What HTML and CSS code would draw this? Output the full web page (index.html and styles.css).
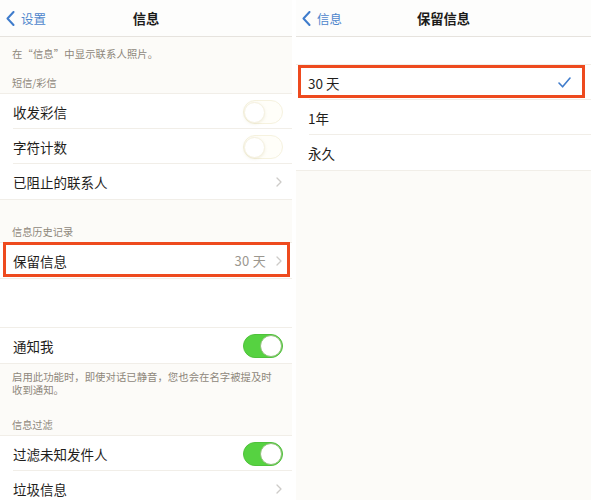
FILE: index.html
```html
<!DOCTYPE html>
<html lang="zh-CN">
<head>
<meta charset="utf-8">
<title>信息</title>
<link rel="stylesheet" href="styles.css">
</head>
<body>
<div class="screens">
  <section class="panel left">
    <header class="nav">
      <div class="back">
        <svg class="back-chev" width="9" height="15" viewBox="0 0 9 15"><path d="M7.5 1 L1.5 7.5 L7.5 14" fill="none" stroke="#3f7ccc" stroke-width="2" stroke-linecap="round" stroke-linejoin="round"/></svg>
        <span>设置</span>
      </div>
      <h1 class="title">信息</h1>
    </header>

    <p class="note first">在“信息”中显示联系人照片。</p>
    <h2 class="group-title t1">短信/彩信</h2>
    <div class="group">
      <div class="row"><span class="label">收发彩信</span><span class="switch off"><span class="knob"></span></span></div>
      <div class="row"><span class="label">字符计数</span><span class="switch off"><span class="knob"></span></span></div>
      <div class="row"><span class="label">已阻止的联系人</span><svg class="chev" width="6" height="10" viewBox="0 0 6 10"><path d="M1 1 L5 5 L1 9" fill="none" stroke="#cdcbc8" stroke-width="1.3" stroke-linecap="round" stroke-linejoin="round"/></svg></div>
    </div>

    <h2 class="group-title t2">信息历史记录</h2>
    <div class="group">
      <div class="row"><span class="label">保留信息</span><span class="value">30 天</span><svg class="chev" width="6" height="10" viewBox="0 0 6 10"><path d="M1 1 L5 5 L1 9" fill="none" stroke="#cdcbc8" stroke-width="1.3" stroke-linecap="round" stroke-linejoin="round"/></svg><span class="highlight"></span></div>
    </div>

    <div class="spacer"></div>
    <div class="group">
      <div class="row"><span class="label">通知我</span><span class="switch on"><span class="knob"></span></span></div>
    </div>
    <p class="note foot">启用此功能时，即使对话已静音，您也会在名字被提及时收到通知。</p>

    <h2 class="group-title t3">信息过滤</h2>
    <div class="group">
      <div class="row"><span class="label">过滤未知发件人</span><span class="switch on"><span class="knob"></span></span></div>
      <div class="row"><span class="label">垃圾信息</span><svg class="chev" width="6" height="10" viewBox="0 0 6 10"><path d="M1 1 L5 5 L1 9" fill="none" stroke="#cdcbc8" stroke-width="1.3" stroke-linecap="round" stroke-linejoin="round"/></svg></div>
    </div>
  </section>

  <section class="panel right">
    <header class="nav">
      <div class="back">
        <svg class="back-chev" width="9" height="15" viewBox="0 0 9 15"><path d="M7.5 1 L1.5 7.5 L7.5 14" fill="none" stroke="#3f7ccc" stroke-width="2" stroke-linecap="round" stroke-linejoin="round"/></svg>
        <span>信息</span>
      </div>
      <h1 class="title">保留信息</h1>
    </header>
    <div class="top-gap"></div>
    <div class="group">
      <div class="row"><span class="label">30 天</span><svg class="check" width="13" height="11" viewBox="0 0 13 11"><path d="M1 6 L4.6 9.8 L12 1" fill="none" stroke="#3f7ccc" stroke-width="1.6" stroke-linecap="round" stroke-linejoin="round"/></svg><span class="highlight h2"></span></div>
      <div class="row"><span class="label">1年</span></div>
      <div class="row"><span class="label">永久</span></div>
    </div>
  </section>
</div>
</body>
</html>
```

FILE: styles.css
```css
* { box-sizing: border-box; margin: 0; padding: 0; }

html, body {
  width: 591px;
  height: 500px;
  overflow: hidden;
  background: #ffffff;
}

body {
  font-family: "Noto Sans CJK SC", "Noto Sans", sans-serif;
  color: #1f1e1c;
}

.screens {
  display: flex;
  gap: 4px;
  height: 500px;
}

.panel {
  background: #fcfbf8;
  height: 500px;
  overflow: hidden;
}

.panel.left { width: 292px; }
.panel.right { width: 295px; flex: 1; }

.nav {
  position: relative;
  height: 37px;
  background: #fdfdfc;
  border-bottom: 1px solid #e6e3de;
  display: flex;
  align-items: center;
  justify-content: center;
}

.back {
  position: absolute;
  left: 6px;
  top: 11px;
  display: flex;
  align-items: center;
  gap: 6px;
  font-size: 12.5px;
  line-height: 15px;
  color: #4f86cc;
}

.title {
  font-size: 13.3px;
  font-weight: 700;
  line-height: 16px;
  color: #1c1b1a;
  margin-top: 1px;
}

.note {
  font-size: 10.3px;
  color: #8e877b;
  padding: 0 12px;
  letter-spacing: 0.15px;
}

.note.first {
  height: 31px;
  padding-top: 9px;
  line-height: 15px;
}

.note.foot {
  padding-top: 6px;
  padding-right: 16px;
  line-height: 13px;
  height: 32px;
  font-size: 10.4px;
  letter-spacing: 0;
}

.group-title {
  font-size: 10.2px;
  font-weight: 400;
  color: #8e877b;
  padding: 0 12px;
  line-height: 14px;
  padding-bottom: 3px;
}

.group-title.t1 { padding-top: 8px; }
.group-title.t2 { padding-top: 25px; }
.group-title.t3 { padding-top: 22px; }

.group {
  background: #ffffff;
  border-top: 1px solid #f1eee8;
  border-bottom: 1px solid #f1eee8;
}

.row {
  position: relative;
  height: 35px;
  display: flex;
  align-items: center;
  padding: 0 9px 0 13px;
  font-size: 13.5px;
}

.right .row { padding-left: 12px; }

.row + .row::before {
  content: "";
  position: absolute;
  left: 13px;
  right: 0;
  top: -1px;
  border-top: 1px solid #f1eee8;
}

.label { flex: 1; }

.value {
  color: #9b978f;
  font-size: 13px;
  margin-right: 10px;
  letter-spacing: 0.3px;
}

.chev { margin-right: 1px; }

.switch {
  position: relative;
  width: 40px;
  height: 24px;
  border-radius: 12px;
  flex: none;
}

.switch.off {
  background: #fffef9;
  border: 1px solid #f6f2df;
}

.switch.on {
  background: #56d241;
  border: 1px solid #4fc23b;
}

.knob {
  position: absolute;
  top: 1px;
  width: 21px;
  height: 21px;
  border-radius: 50%;
  background: #ffffff;
}

.switch.off .knob {
  left: 0;
  box-shadow: 0 1px 3px rgba(200, 190, 140, 0.25);
  border: 1px solid #f5f1e1;
}

.switch.on .knob {
  right: 0;
  top: 0;
  width: 22px;
  height: 22px;
  border: 1px solid #8fbf79;
}

.spacer { height: 48px; background: #ffffff; }

.top-gap { height: 27px; background: #ffffff; }

.check { margin-right: 11px; }

.highlight {
  position: absolute;
  left: 3px;
  right: 2px;
  top: -1px;
  bottom: 1px;
  border: 3px solid #ee4a1e;
  pointer-events: none;
}

.highlight.h2 {
  left: 2px;
  right: 6px;
  top: 0;
  bottom: 2px;
}
```
